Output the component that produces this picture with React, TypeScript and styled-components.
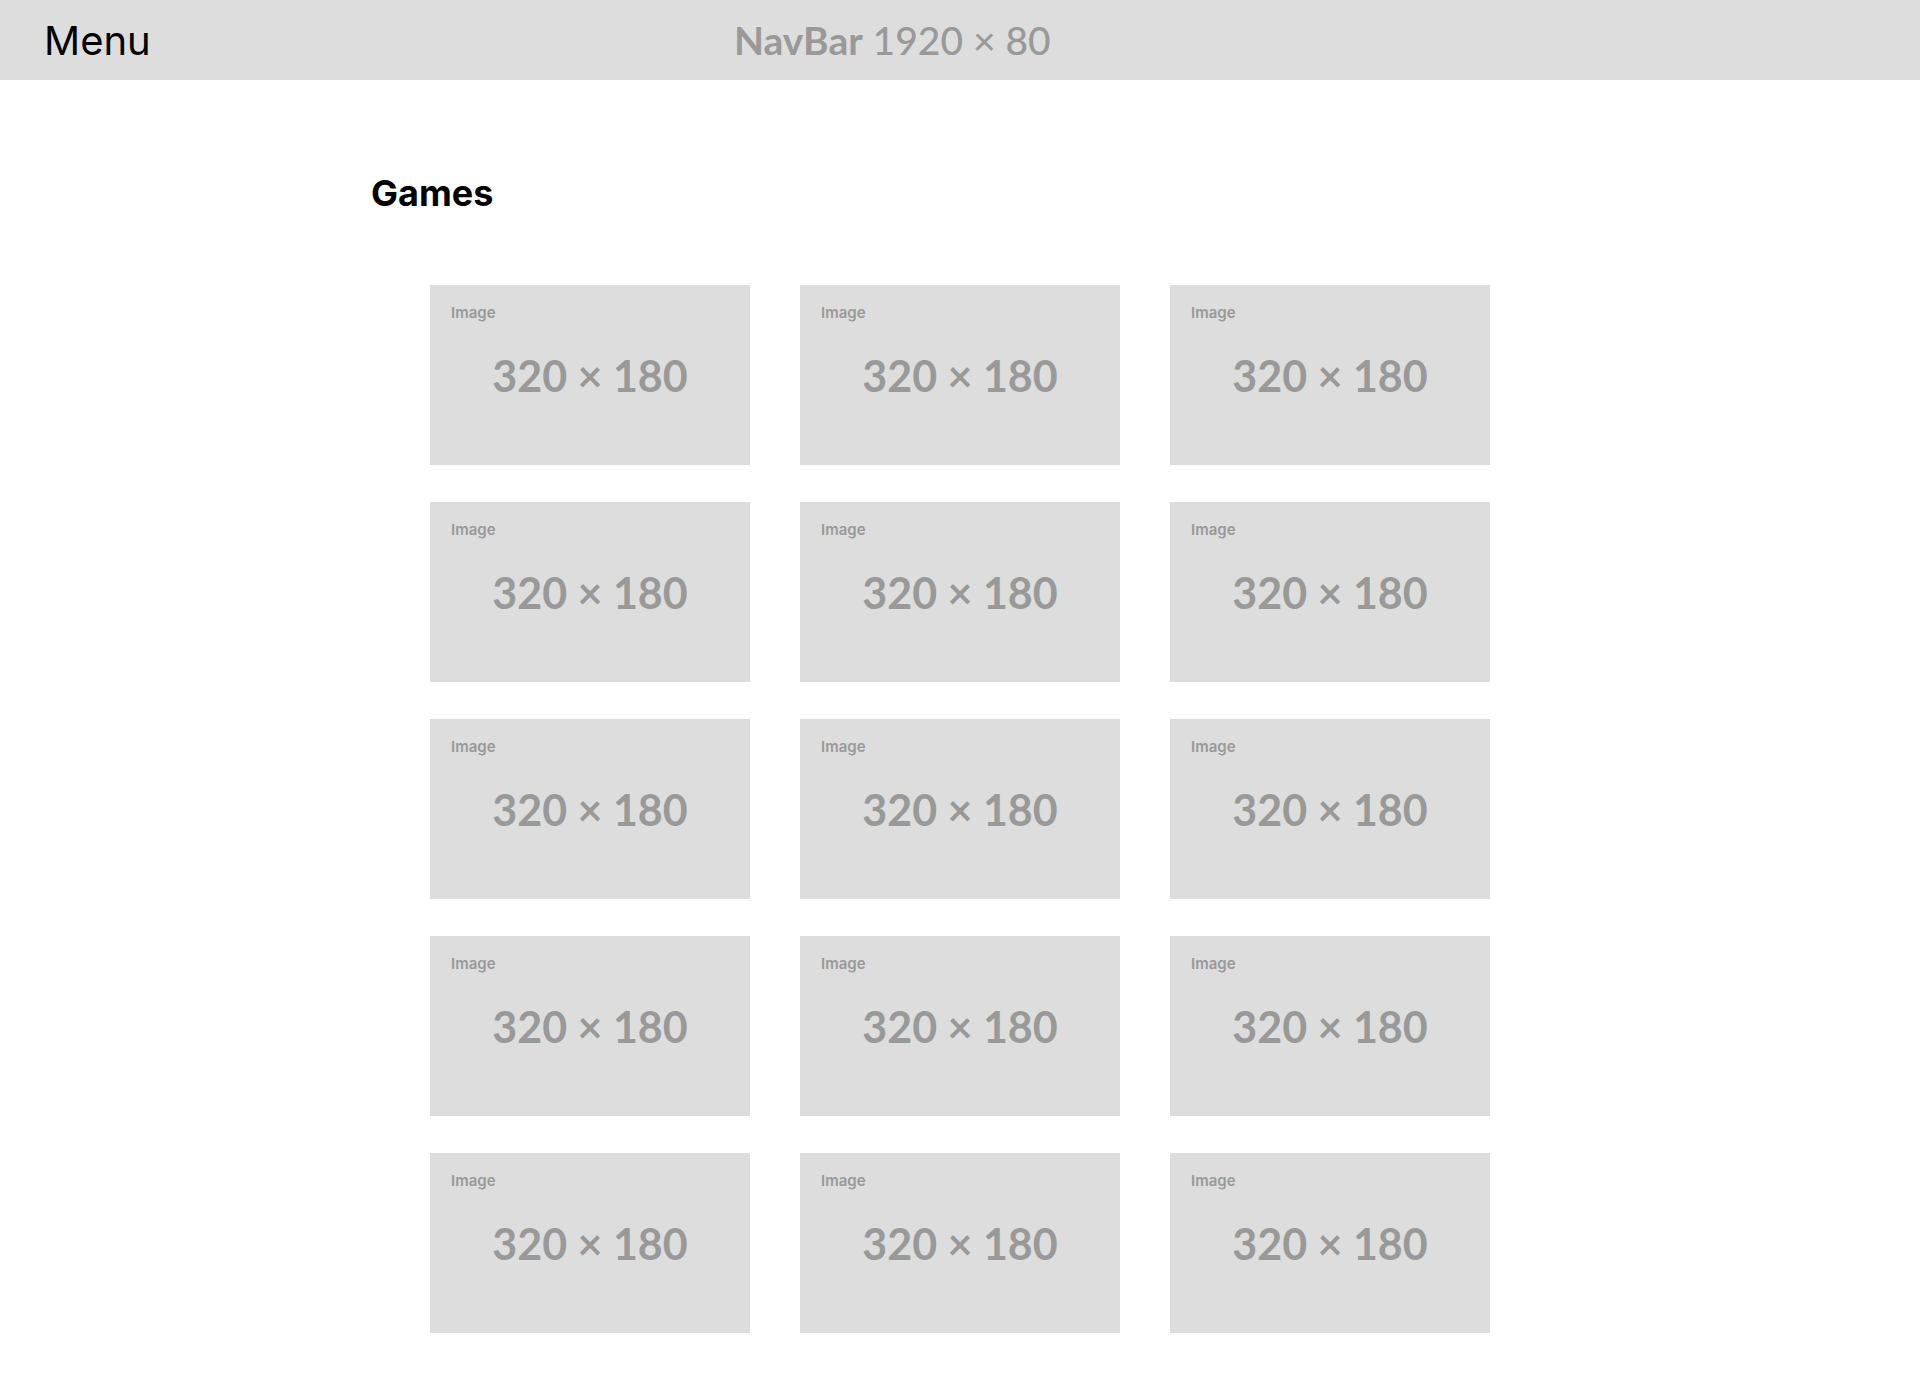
import React from "react";
import styled, { createGlobalStyle } from "styled-components";

const GlobalStyle = createGlobalStyle`
  html, body {
    margin: 0;
    padding: 0;
    background: #ffffff;
  }
  body {
    font-family: Inter, "Noto Sans", sans-serif;
  }
  * {
    box-sizing: border-box;
  }
`;

const NavBar = styled.header`
  display: flex;
  align-items: center;
  height: 80px;
  padding-left: 44px;
  background: #dddddd;
`;

const MenuLabel = styled.span`
  font-family: Inter, sans-serif;
  font-size: 40px;
  font-weight: 400;
  color: #000000;
  width: 690px;
`;

const Placeholder = styled.span`
  font-family: Lato, sans-serif;
  font-size: 39px;
  font-weight: 500;
  color: #999999;
  white-space: pre;
`;

const Strong = styled.b`
  font-weight: 700;
`;

const Main = styled.main`
  padding: 91px 0 65px 371px;
`;

const Title = styled.h1`
  margin: 0;
  font-family: Inter, sans-serif;
  font-size: 36px;
  line-height: 44px;
  font-weight: 700;
  color: #000000;
`;

const Grid = styled.div`
  display: grid;
  grid-template-columns: repeat(3, 320px);
  column-gap: 50px;
  row-gap: 37px;
  margin: 70px 0 0 59px;
`;

const Card = styled.div`
  display: grid;
  width: 320px;
  height: 180px;
  background: #dddddd;
`;

const CardTag = styled.span`
  grid-area: 1 / 1;
  align-self: start;
  justify-self: start;
  margin: 19px 0 0 21px;
  font-family: Inter, sans-serif;
  font-size: 15px;
  line-height: 18px;
  font-weight: 600;
  color: #999999;
`;

const CardSize = styled.span`
  grid-area: 1 / 1;
  place-self: center;
  font-family: Lato, sans-serif;
  font-size: 43px;
  font-weight: 700;
  color: #999999;
`;

const games = Array.from({ length: 15 }, (_, i) => i);

export default function App() {
  return (
    <>
      <GlobalStyle />
      <NavBar>
        <MenuLabel>Menu</MenuLabel>
        <Placeholder>
          <Strong>NavBar</Strong> 1920 × 80
        </Placeholder>
      </NavBar>
      <Main>
        <Title>Games</Title>
        <Grid>
          {games.map((g) => (
            <Card key={g}>
              <CardTag>Image</CardTag>
              <CardSize>320 × 180</CardSize>
            </Card>
          ))}
        </Grid>
      </Main>
    </>
  );
}
